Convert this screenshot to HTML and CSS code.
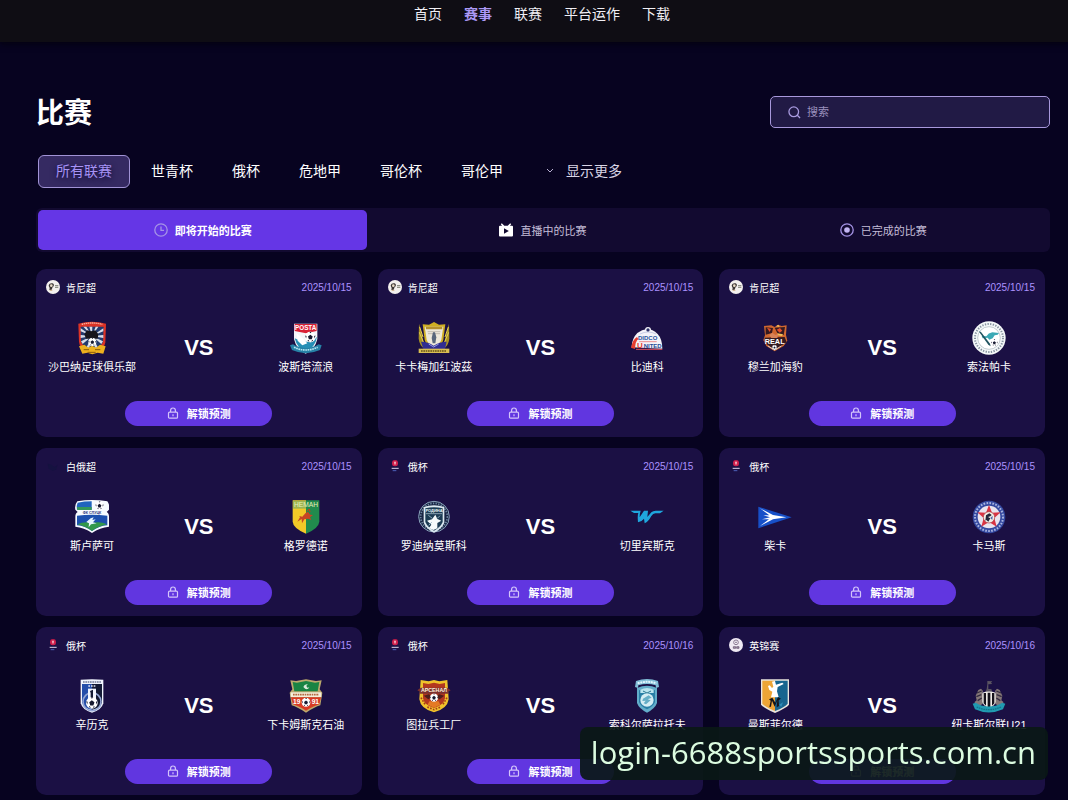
FILE: index.html
```html
<!DOCTYPE html>
<html lang="zh-CN">
<head>
  <meta charset="utf-8">
  <meta name="viewport" content="width=device-width, initial-scale=1">
  <title>比赛</title>
  <link rel="stylesheet" href="styles.css">
</head>
<body>
  <!-- shared icons -->
  <svg class="sprite" aria-hidden="true">
    <symbol id="icon-lock" viewBox="0 0 12 12">
      <rect x="1.5" y="5.2" width="9" height="6" rx="1" fill="none" stroke="currentColor" stroke-width="1.2"/>
      <path d="M3.6 5V3.4a2.4 2.4 0 0 1 4.8 0V5M6 7.2v2" fill="none" stroke="currentColor" stroke-width="1.2"/>
    </symbol>
    <symbol id="league-kenya" viewBox="0 0 42 42">
      <circle cx="21" cy="21" r="21" fill="#f3f0ee"/>
      <path d="M8 17c1-7 9-9 14-6 3 3 2 8-2 10l-3 8-7 1 1-6z" fill="#3b3634"/>
      <circle cx="16" cy="17" r="4" fill="#e9dcc8"/>
      <path d="M27 17h10M27 22h10" stroke="#7c7f72" stroke-width="3"/>
      <path d="M11 31h8" stroke="#b98c4e" stroke-width="2"/>
    </symbol>
    <symbol id="league-russia" viewBox="0 0 42 42">
      <path d="M14 4h14v17H14z" fill="#8c1440"/>
      <circle cx="21" cy="13" r="9" fill="#cf1f4c"/>
      <path d="M18 8h6l-1 6-2 5-2-5z" fill="#f4b9c4"/>
      <path d="M11 28h21" stroke="#d9d3ea" stroke-width="3"/>
      <path d="M14 35h11" stroke="#4c60b8" stroke-width="3"/>
    </symbol>
    <symbol id="league-belarus" viewBox="0 0 42 42">
      <path d="M5 14l12 3 8 8 10-8-5 15-10 3-12-6z" fill="#151240"/>
    </symbol>
    <symbol id="league-england" viewBox="0 0 42 42">
      <circle cx="21" cy="21" r="21" fill="#efe9f3"/>
      <circle cx="21" cy="13" r="7" fill="none" stroke="#8c7b94" stroke-width="3"/>
      <path d="M18 13h6M13 26h7v5h-7zM23 26h7v5h-7z" stroke="#5b4b66" stroke-width="2" fill="#a98fae"/>
    </symbol>
    <symbol id="ball" viewBox="0 0 24 24">
      <circle cx="12" cy="12" r="11.5" fill="#fff"/>
      <path d="M12 7l5 4-2 6H9l-2-6zM10 1h5l-3 3zM1 9l3 1-1 5zM23 9l-3 1 1 5zM6 20l2-2 2 4zM18 20l-2-2-2 4z" fill="#171a30"/>
    </symbol>
  </svg>

  <header class="topbar">
    <nav class="nav">
      <a href="#">首页</a>
      <a href="#" class="current">赛事</a>
      <a href="#">联赛</a>
      <a href="#">平台运作</a>
      <a href="#">下载</a>
    </nav>
  </header>

  <main class="page">
    <div class="page-head">
      <h1>比赛</h1>
      <label class="search">
        <svg viewBox="0 0 14 14" aria-hidden="true"><circle cx="6.2" cy="6.2" r="5.2"/><path d="M10 10l3 3"/></svg>
        <input type="search" placeholder="搜索" aria-label="搜索">
      </label>
    </div>

    <div class="filters">
      <button type="button" class="chip active">所有联赛</button>
      <button type="button" class="chip">世青杯</button>
      <button type="button" class="chip">俄杯</button>
      <button type="button" class="chip">危地甲</button>
      <button type="button" class="chip">哥伦杯</button>
      <button type="button" class="chip">哥伦甲</button>
      <button type="button" class="chip more">
        <svg viewBox="0 0 8 8" aria-hidden="true"><path d="M1 3l3 3 3-3"/></svg>
        显示更多
      </button>
    </div>

    <div class="tabs">
      <button type="button" class="tab active">
        <svg viewBox="0 0 14 14" aria-hidden="true"><circle cx="7" cy="7" r="6.2"/><path d="M7 3.6V7.4h3"/></svg>
        即将开始的比赛
      </button>
      <button type="button" class="tab">
        <svg viewBox="0 0 14 14" aria-hidden="true"><path class="tv" d="M2.800.3L5.300 2.800h3.400L11.200.3l1 .9-1.300 1.600H13q1 0 1 1v8.700q0 1-1 1H1q-1 0-1-1V3.800q0-1 1-1h2.100L1.800 1.200z"/><path class="play" d="M5 5.200v5.600L9.800 8z"/></svg>
        直播中的比赛
      </button>
      <button type="button" class="tab">
        <svg viewBox="0 0 14 14" aria-hidden="true"><circle cx="7" cy="7" r="6.2"/><circle class="dot" cx="7" cy="7" r="2.8"/></svg>
        已完成的比赛
      </button>
    </div>

    <div class="matches">
      <article class="card">
        <div class="card-head">
          <svg class="league" aria-hidden="true"><use href="#league-kenya"/></svg>
          <span>肯尼超</span>
          <time>2025/10/15</time>
        </div>
        <div class="versus">
          <div class="team">
            <svg class="crest" viewBox="0 0 102 102" aria-hidden="true">
              <path d="M10 8Q50-4 93 8L91 64Q88 82 74 86H29Q14 80 12 62z" fill="#dc3326"/>
              <path d="M17 17h69l-2 46-12 19H30L18 62z" fill="#233a6d"/>
              <path d="M51 45L17 22v9zM51 45L17 42v9zM51 45L18 61l5 8zM51 45L25 17h9zM51 45L43 17h9zM51 45L62 17h8zM51 45l34-23v9zM51 45l34-3v9zM51 45l33 16-5 8zM51 45L34 80h9zM51 45l9 35h9z" fill="#d9dde8"/>
              <path d="M20 10q31-8 62 0" stroke="#f8b39f" stroke-width="4" stroke-dasharray="4 2" fill="none"/>
              <path d="M28 40l8-12 12 3 13-3 9 12-2 13H33z" fill="#17151c"/>
              <path d="M12 76l16-5 12 9 11-6 12 6 12-9 17 5-7 22-17-3-16 5-15-5-15 3z" fill="#eeb11e"/>
              <path d="M26 86h16M60 86h16M38 94h24" stroke="#8b5b0b" stroke-width="3"/>
              <use href="#ball" x="39" y="50" width="26" height="26"/>
            </svg>
            <span class="team-name">沙巴纳足球俱乐部</span>
          </div>
          <strong class="vs">VS</strong>
          <div class="team">
            <svg class="crest" viewBox="0 0 102 102" aria-hidden="true">
              <path d="M15 8h70v46Q78 86 50 98 22 86 15 54z" fill="#f5f6fa"/>
              <path d="M17 9h66v21L51 37 17 30z" fill="#d92136"/>
              <text x="50" y="27" text-anchor="middle" font-size="19" font-weight="bold" fill="#fff">POSTA</text>
              <path d="M17 52q16 9 33 10 18 1 34-14-5 30-34 45Q24 81 17 52z" fill="#268fb5"/>
              <use href="#ball" x="47" y="31" width="34" height="34"/>
              <path d="M22 36l19 16 14 15-15 6-14-14z" fill="#fff"/>
              <path d="M3 73l9-3q39 23 77 0l9 3-5 14q-43 19-84 0z" fill="#2681a6"/>
              <path d="M15 79q35 16 71 0" stroke="#b7e7f4" stroke-width="5" stroke-dasharray="5 2" fill="none"/>
            </svg>
            <span class="team-name">波斯塔流浪</span>
          </div>
        </div>
        <button type="button" class="unlock"><svg aria-hidden="true"><use href="#icon-lock"/></svg>解锁预测</button>
      </article>

      <article class="card">
        <div class="card-head">
          <svg class="league" aria-hidden="true"><use href="#league-kenya"/></svg>
          <span>肯尼超</span>
          <time>2025/10/15</time>
        </div>
        <div class="versus">
          <div class="team">
            <svg class="crest" viewBox="0 0 102 102" aria-hidden="true">
              <path d="M6 8q7 25 12 47l4 28q-14-9-17-30zM96 8q-7 25-12 47l-4 28q14-9 17-30z" fill="#a99224"/>
              <path d="M8 18l10 30M7 34l12 29M94 18L84 48M95 34L83 63" stroke="#e4cf53" stroke-width="3"/>
              <path d="M17 10l19 1 15-8 15 8 19-1-6 46Q74 77 51 86 28 77 23 56z" fill="#cfae22"/>
              <path d="M23 17h56l-6 39Q69 69 51 77 33 69 29 56z" fill="#ede8db"/>
              <path d="M26 17h50v8H27z" fill="#b4902d"/>
              <path d="M32 32h38M33 38h36" stroke="#aaa39a" stroke-width="2"/>
              <path d="M48 34h6l4 15-3 18h-8l-3-16z" fill="#59677c"/>
              <path d="M12 62q22 0 38 12 17-12 39-12l-5 22H19z" fill="#302d91"/>
              <path d="M35 69l15 9 15-9" stroke="#969be5" stroke-width="3" fill="none"/>
              <path d="M5 83h92v13H5z" fill="#d9bf52"/>
              <path d="M12 90h77" stroke="#645118" stroke-width="4" stroke-dasharray="5 2"/>
            </svg>
            <span class="team-name">卡卡梅加红波茲</span>
          </div>
          <strong class="vs">VS</strong>
          <div class="team">
            <svg class="crest" viewBox="0 0 102 102" aria-hidden="true">
              <path d="M5 79Q5 53 22 36 36 25 51 24 68 24 83 39 97 54 97 83z" fill="#f4f3f9"/>
              <path d="M3 80q6-26 18-32l4 6Q16 60 15 84z" fill="#e73e30"/>
              <circle cx="54" cy="27" r="9" fill="#f4f3f9"/>
              <circle cx="54" cy="27" r="5" fill="#2c3269"/>
              <path d="M30 39q24-12 48 0" fill="none" stroke="#b4b9da" stroke-width="2"/>
              <text x="53" y="58" text-anchor="middle" font-size="18" font-weight="bold" fill="#29539e">DIDCO</text>
              <path d="M28 62h52" stroke="#e85b56" stroke-width="2"/>
              <text x="30" y="81" text-anchor="middle" font-size="24" font-weight="bold" fill="#e73e30">U</text>
              <text x="68" y="80" text-anchor="middle" font-size="18" font-weight="bold" fill="#264c94">NITED</text>
              <path d="M18 85h79" stroke="#dd5260" stroke-width="3"/>
            </svg>
            <span class="team-name">比迪科</span>
          </div>
        </div>
        <button type="button" class="unlock"><svg aria-hidden="true"><use href="#icon-lock"/></svg>解锁预测</button>
      </article>

      <article class="card">
        <div class="card-head">
          <svg class="league" aria-hidden="true"><use href="#league-kenya"/></svg>
          <span>肯尼超</span>
          <time>2025/10/15</time>
        </div>
        <div class="versus">
          <div class="team">
            <svg class="crest" viewBox="0 0 102 102" aria-hidden="true">
              <path d="M18 15l22-2 10 5 10-7 11 4 15-2-2 29 4 17-11 16-27 16-25-16-9-18 5-14z" fill="#cf672f"/>
              <path d="M23 19l22 2-3 15-19 5zM50 20l31-2-4 24-18-4zM20 50l60-2 6 16-36 22-30-21z" fill="#351a20"/>
              <path d="M27 20l12 4-4 9zM56 26l10-5 7 8-8 6z" fill="#e24d2e"/>
              <path d="M54 16l7-5 4 7zM58 37l17 3-3 5-14-2z" fill="#f1c35c"/>
              <path d="M34 42l9-7 9 7 9-4-3 13H40z" fill="#d78358"/>
              <text x="50" y="70" text-anchor="middle" font-size="22" font-weight="bold" fill="#fff">REAL</text>
              <path d="M30 75l20 12 20-12" stroke="#d9c9c6" stroke-width="3" fill="none"/>
              <use href="#ball" x="42" y="72" width="15" height="15"/>
            </svg>
            <span class="team-name">穆兰加海豹</span>
          </div>
          <strong class="vs">VS</strong>
          <div class="team">
            <svg class="crest" viewBox="0 0 102 102" aria-hidden="true">
              <circle cx="51" cy="51" r="50" fill="#f5f8f9"/>
              <circle cx="51" cy="51" r="42" fill="none" stroke="#8794a0" stroke-width="6" stroke-dasharray="4 4"/>
              <circle cx="51" cy="51" r="34" fill="#fff" stroke="#a6b3b9" stroke-width="2"/>
              <path d="M29 45l14 1q6-10 18-12l20 2-4 5-9 2-6 9-10 4-5-6-15 2z" fill="#3ba9b5"/>
              <path d="M20 31l29 40 7 5-2-8-27-35z" fill="#20535f"/>
              <use href="#ball" x="56" y="54" width="22" height="22"/>
            </svg>
            <span class="team-name">索法帕卡</span>
          </div>
        </div>
        <button type="button" class="unlock"><svg aria-hidden="true"><use href="#icon-lock"/></svg>解锁预测</button>
      </article>

      <article class="card">
        <div class="card-head">
          <svg class="league" aria-hidden="true"><use href="#league-belarus"/></svg>
          <span>白俄超</span>
          <time>2025/10/15</time>
        </div>
        <div class="versus">
          <div class="team">
            <svg class="crest" viewBox="0 0 102 102" aria-hidden="true">
              <path d="M7 4Q51-4 97 4q8 11 5 25l-7 7q7 3 7 14v30Q75 82 51 99 27 82 1 80V50q0-11 7-14l-7-7Q-2 15 7 4z" fill="#f7fbff"/>
              <path d="M8 8q20-4 42-4v25H6Q3 17 8 8z" fill="#2164bd"/>
              <path d="M6 21h44v9H7z" fill="#34985a"/>
              <use href="#ball" x="60" y="3" width="27" height="27"/>
              <text x="51" y="43" text-anchor="middle" font-size="11" font-weight="bold" fill="#1f3478">ФК СЛУЦК</text>
              <path d="M6 47q45-5 91 0v29Q72 78 51 93 30 78 6 76z" fill="#1c50ae"/>
              <path d="M7 73q22-10 44-4 23-6 45 4-27 6-45 20Q33 79 7 73z" fill="#32984a"/>
              <path d="M34 66l13-11 9-3-4 8 10-2-8 9 11 3-17 3-7 9 1-12z" fill="#e7f5ff"/>
            </svg>
            <span class="team-name">斯卢萨可</span>
          </div>
          <strong class="vs">VS</strong>
          <div class="team">
            <svg class="crest" viewBox="0 0 102 102" aria-hidden="true">
              <path d="M11 1h40v100Q12 84 11 65z" fill="#f3c928"/>
              <path d="M51 1h40v64q-2 20-40 36z" fill="#218b4d"/>
              <path d="M12 2h39v24H12z" fill="#9eb552"/>
              <text x="51" y="21" text-anchor="middle" font-size="20" fill="#e8efbd">НЕМАН</text>
              <path d="M31 48l9 2 9-10 8-5 7 9 8 1-9 7 4 8-10-4-11 2-7 12-1-13-13 8 8-13z" fill="#c74524"/>
              <path d="M53 34l8-7 2 9" stroke="#bd3e1e" stroke-width="3" fill="none"/>
            </svg>
            <span class="team-name">格罗德诺</span>
          </div>
        </div>
        <button type="button" class="unlock"><svg aria-hidden="true"><use href="#icon-lock"/></svg>解锁预测</button>
      </article>

      <article class="card">
        <div class="card-head">
          <svg class="league" aria-hidden="true"><use href="#league-russia"/></svg>
          <span>俄杯</span>
          <time>2025/10/15</time>
        </div>
        <div class="versus">
          <div class="team">
            <svg class="crest" viewBox="0 0 102 102" aria-hidden="true">
              <circle cx="51" cy="50" r="46" fill="#182443" stroke="#8ca4bd" stroke-width="3"/>
              <circle cx="51" cy="50" r="40" fill="none" stroke="#6f88a3" stroke-width="5" stroke-dasharray="4 4"/>
              <path d="M20 21q31-10 62 0v47Q75 86 51 98 27 86 20 68z" fill="#dce9f1"/>
              <path d="M25 25q26-7 52 0v41Q70 82 51 92 32 82 25 66z" fill="#1b3b53"/>
              <text x="51" y="37" text-anchor="middle" font-size="12" font-weight="bold" fill="#e9f5fb">РОДИНА</text>
              <path d="M27 41h48" stroke="#bdd5e2" stroke-width="2"/>
              <path d="M30 62l15-4 10-14 6 13 12 5-12 7 0 16-12 5-13-6 7-10z" fill="#f5fafb"/>
              <path d="M34 46l12 9M69 47l-8 8M35 76l9-9" stroke="#8caabc" stroke-width="3"/>
            </svg>
            <span class="team-name">罗迪纳莫斯科</span>
          </div>
          <strong class="vs">VS</strong>
          <div class="team">
            <svg class="crest" viewBox="0 0 102 102" aria-hidden="true">
              <path d="M1 32h31q-4 12-3 20l13-20h12L52 51l12-14q5-5 13-5h24l-11 8H76q-7 0-12 8-9 17-20 22l-2-14q-7 9-18 11-2-20 1-28H12z" fill="#1fa6dd"/>
            </svg>
            <span class="team-name">切里宾斯克</span>
          </div>
        </div>
        <button type="button" class="unlock"><svg aria-hidden="true"><use href="#icon-lock"/></svg>解锁预测</button>
      </article>

      <article class="card">
        <div class="card-head">
          <svg class="league" aria-hidden="true"><use href="#league-russia"/></svg>
          <span>俄杯</span>
          <time>2025/10/15</time>
        </div>
        <div class="versus">
          <div class="team">
            <svg class="crest" viewBox="0 0 102 102" aria-hidden="true">
              <path d="M1 20l100 32L1 85z" fill="#1750c8"/>
              <path d="M6 25l39 20 40 7-40 6L6 78l27-20H12l24-6-20-6h18z" fill="#fff"/>
            </svg>
            <span class="team-name">柴卡</span>
          </div>
          <strong class="vs">VS</strong>
          <div class="team">
            <svg class="crest" viewBox="0 0 102 102" aria-hidden="true">
              <circle cx="51" cy="51" r="49" fill="#3449a0"/>
              <circle cx="51" cy="51" r="42" fill="none" stroke="#a9b5e0" stroke-width="6" stroke-dasharray="5 4"/>
              <circle cx="51" cy="51" r="34" fill="#e9e4ee"/>
              <path d="M51 15l9 23 26-1-19 17 7 26-23-14-23 14 7-26-19-17 26 1z" fill="#d93443"/>
              <circle cx="51" cy="52" r="17" fill="#f5efe7" stroke="#a43c45" stroke-width="2"/>
              <path d="M42 46l10-6 7 5-4 4-7 2 7 4-6 10-6-5-3 2z" fill="#22273b"/>
              <path d="M55 54l7-7-1 13z" fill="#4b63ad"/>
            </svg>
            <span class="team-name">卡马斯</span>
          </div>
        </div>
        <button type="button" class="unlock"><svg aria-hidden="true"><use href="#icon-lock"/></svg>解锁预测</button>
      </article>

      <article class="card">
        <div class="card-head">
          <svg class="league" aria-hidden="true"><use href="#league-russia"/></svg>
          <span>俄杯</span>
          <time>2025/10/15</time>
        </div>
        <div class="versus">
          <div class="team">
            <svg class="crest" viewBox="0 0 102 102" aria-hidden="true">
              <path d="M17 2q34-3 68 0v71Q80 93 51 101 22 93 17 73z" fill="#f0f4fd"/>
              <path d="M21 15h30v78Q24 87 21 70z" fill="#244eaa"/>
              <path d="M51 15h30v55Q79 85 51 93z" fill="#131a35"/>
              <path d="M24 9h54" stroke="#6f7895" stroke-width="5" stroke-dasharray="5 2"/>
              <path d="M40 21h22" stroke="#e2e8fa" stroke-width="4" stroke-dasharray="5 3"/>
              <circle cx="51" cy="68" r="27" fill="none" stroke="#93a5d3" stroke-width="5"/>
              <path d="M39 29h24v31H39z" fill="#f1f5ff"/>
              <path d="M45 36l9-4v25h-7V42z" fill="#131a35"/>
              <use href="#ball" x="32" y="53" width="37" height="37"/>
            </svg>
            <span class="team-name">辛历克</span>
          </div>
          <strong class="vs">VS</strong>
          <div class="team">
            <svg class="crest" viewBox="0 0 102 102" aria-hidden="true">
              <path d="M4 4l17 2 30-5 30 5 17-2-6 27 8 10-6 38q-17 5-43 22Q25 84 8 79L2 41l8-10z" fill="#bba96c"/>
              <path d="M11 9l13 2 27-5 27 5 13-2-5 28H16z" fill="#198443"/>
              <path d="M43 24q3-10 14-8-8 4-2 10l6-1q-7 12-18-1z" fill="#dbeadc"/>
              <path d="M5 40h92v14H5z" fill="#f4efdc"/>
              <path d="M12 47h78" stroke="#b46a42" stroke-width="5" stroke-dasharray="5 2"/>
              <path d="M6 55h90l-5 21q-14 4-40 19Q26 80 12 76z" fill="#d83b24"/>
              <text x="23" y="76" text-anchor="middle" font-size="20" font-weight="bold" fill="#fff">19</text>
              <text x="79" y="76" text-anchor="middle" font-size="20" font-weight="bold" fill="#fff">91</text>
              <use href="#ball" x="37" y="56" width="28" height="28"/>
            </svg>
            <span class="team-name">下卡姆斯克石油</span>
          </div>
        </div>
        <button type="button" class="unlock"><svg aria-hidden="true"><use href="#icon-lock"/></svg>解锁预测</button>
      </article>

      <article class="card">
        <div class="card-head">
          <svg class="league" aria-hidden="true"><use href="#league-russia"/></svg>
          <span>俄杯</span>
          <time>2025/10/16</time>
        </div>
        <div class="versus">
          <div class="team">
            <svg class="crest" viewBox="0 0 102 102" aria-hidden="true">
              <path d="M11 3l24 4 16-4 16 4 24-4 4 58q-4 29-44 39Q11 90 7 61z" fill="#f0c22b"/>
              <path d="M18 12l16 3 17-4 17 4 16-3v46q-5 22-33 29Q23 80 18 58z" fill="#b3381f"/>
              <path d="M12 56l14 23M90 56L76 79M31 84l20 8 20-8" stroke="#a83c16" stroke-width="5" stroke-dasharray="5 4" fill="none"/>
              <path d="M1 34l10-8h80l10 8-9 5 5 5H5l5-5z" fill="#7c302e"/>
              <text x="51" y="40" text-anchor="middle" font-size="16" font-weight="bold" fill="#fff3de">АРСЕНАЛ</text>
              <path d="M20 50l15-4 13 6-14 9zM82 50l-15-4-13 6 14 9z" fill="#4e1e1b"/>
              <path d="M37 67h28l5 10-19 9-19-9z" fill="#e47a24"/>
              <use href="#ball" x="38" y="43" width="26" height="26"/>
            </svg>
            <span class="team-name">图拉兵工厂</span>
          </div>
          <strong class="vs">VS</strong>
          <div class="team">
            <svg class="crest" viewBox="0 0 102 102" aria-hidden="true">
              <path d="M18 6q33-12 66 0l3 18-9 3-1-8q-26-8-52 0l-1 8-9-3z" fill="#81bdd7"/>
              <path d="M23 13q28-9 56 0" stroke="#e2f7fd" stroke-width="6" stroke-dasharray="6 2" fill="none"/>
              <path d="M21 27q30-14 60 0v45q-6 17-30 29-24-12-30-29z" fill="#63adc9"/>
              <path d="M27 34q24-10 48 0v35q-5 13-24 22-19-9-24-22z" fill="#287fa6"/>
              <path d="M31 32q20-10 40 0v10H31z" fill="#bae5ef"/>
              <path d="M39 36l12 6 12-6" stroke="#26738e" stroke-width="3" fill="none"/>
              <circle cx="51" cy="63" r="20" fill="#d4edf3"/>
              <path d="M39 59l17-10 9 7-12 5 9 3-14 12-7-3 6-8-10 1z" fill="#65aec6"/>
            </svg>
            <span class="team-name">索科尔萨拉托夫</span>
          </div>
        </div>
        <button type="button" class="unlock"><svg aria-hidden="true"><use href="#icon-lock"/></svg>解锁预测</button>
      </article>

      <article class="card">
        <div class="card-head">
          <svg class="league" aria-hidden="true"><use href="#league-england"/></svg>
          <span>英锦赛</span>
          <time>2025/10/16</time>
        </div>
        <div class="versus">
          <div class="team">
            <svg class="crest" viewBox="0 0 102 102" aria-hidden="true">
              <path d="M9 1h84v76q-7 9-42 25Q16 86 9 77z" fill="#e9e5dd"/>
              <path d="M13 5h38v91Q20 82 13 74z" fill="#eda536"/>
              <path d="M51 5h38v69q-8 10-38 22z" fill="#17658f"/>
              <path d="M42 8l9-2 3 11 19-6 4 4-18 9-2 13 5 18H39l4-17-9-5-4-12 5-2 7 8 4-4z" fill="#fff"/>
              <path d="M33 61l10-5 9 15 8-17 9 5-7 5 1 17-7 4 2-21-8 19-8-18-3 18-5 1 4-19z" fill="#14161b"/>
              <path d="M63 77l12-7-5 13z" fill="#2d8db8"/>
            </svg>
            <span class="team-name">曼斯菲尔德</span>
          </div>
          <strong class="vs">VS</strong>
          <div class="team">
            <svg class="crest" viewBox="0 0 102 102" aria-hidden="true">
              <path d="M46 6l15 1-4 4 4 4-12 1v14h9l3 10H40l4-10 2-14z" fill="#5a5461"/>
              <path d="M7 70l7-6-3-14 8-17 8-4 6 7-3 8 7 4-3 25-14 10zM95 70l-7-6 3-14-8-17-8-4-6 7 3 8-7 4 3 25 14 10z" fill="#857878"/>
              <path d="M15 42l14-6M13 53l15-6M17 65l12-8M87 42l-14-6M89 53l-15-6M85 65l-12-8" stroke="#332b40" stroke-width="4"/>
              <path d="M31 41q20-7 40 0v28q-4 13-20 20-16-7-20-20z" fill="#efece7"/>
              <path d="M35 42h7v38l-7-7zM47 41h8v45l-4 2-4-2zM60 42h7v31l-7 7z" fill="#16131b"/>
              <path d="M2 74l9-3q39 23 80 0l9 3-7 17q-43 19-84 0z" fill="#219bb1"/>
              <path d="M14 84q36 16 74 0" stroke="#12748a" stroke-width="4" stroke-dasharray="5 2" fill="none"/>
            </svg>
            <span class="team-name">纽卡斯尔联U21</span>
          </div>
        </div>
        <button type="button" class="unlock"><svg aria-hidden="true"><use href="#icon-lock"/></svg>解锁预测</button>
      </article>
    </div>
  </main>

  <div class="site-badge">login-6688sportssports.com.cn</div>
</body>
</html>
```
FILE: styles.css
```css
* {
  margin: 0;
  padding: 0;
  box-sizing: border-box;
}

body {
  background-color: #070320;
  color: #fff;
  font-family: "Liberation Sans", "Noto Sans CJK SC", sans-serif;
  overflow-x: hidden;
}

button {
  border: 0;
  background: none;
  color: inherit;
  font-family: inherit;
  cursor: pointer;
}

.sprite {
  display: none;
}

/* top navigation */
.topbar {
  height: 42px;
  padding: 3px 0 0 16px;
  background-color: #0f0d14;
  box-shadow: 0 2px 6px #04020f;
}

.nav {
  display: flex;
  justify-content: center;
  gap: 22px;
  font-size: 14px;
  line-height: 22px;
}

.nav a {
  color: #f1eff5;
  text-decoration: none;
}

.nav .current {
  color: #ab98f5;
  font-weight: bold;
}

/* title and search */
.page {
  padding: 54px 18px 4px 36px;
}

.page-head {
  display: flex;
  align-items: center;
  justify-content: space-between;
  height: 32px;
}

h1 {
  padding-top: 4px;
  font-size: 28px;
  line-height: 32px;
}

.search {
  display: flex;
  align-items: center;
  gap: 6px;
  width: 280px;
  height: 32px;
  padding: 0 17px;
  border: 1px solid #a898dc;
  border-radius: 5px;
  background-color: #211a45;
}

.search svg {
  width: 13px;
  height: 13px;
  fill: none;
  stroke: #a99be0;
  stroke-width: 1.4;
}

.search input {
  flex: 1;
  min-width: 0;
  border: 0;
  outline: 0;
  background: none;
  color: #fff;
  font-family: inherit;
  font-size: 11px;
}

.search input::placeholder {
  color: #9a90bd;
}

/* league filters */
.filters {
  display: flex;
  gap: 3px;
  margin: 27px 0 20px 2px;
}

.chip {
  height: 33px;
  padding: 0 17px 4px;
  border: 1px solid transparent;
  border-radius: 6px;
  font-size: 14px;
  white-space: nowrap;
}

.chip.active {
  border-color: #a193d6;
  background-color: #352a62;
  color: #a793f5;
  text-shadow: 0 2px 6px #0c0630;
}

.chip.more {
  display: flex;
  align-items: center;
  gap: 12px;
  padding-left: 21px;
  color: #d9d5e6;
}

.more svg {
  width: 8px;
  height: 8px;
  fill: none;
  stroke: #b6aed0;
}

/* match state tabs */
.tabs {
  display: grid;
  grid-template-columns: repeat(3, 1fr);
  gap: 11px;
  padding: 2px;
  border-radius: 6px;
  background-color: #120a30;
}

.tab {
  display: flex;
  align-items: center;
  justify-content: center;
  gap: 7px;
  height: 40px;
  padding-bottom: 1px;
  border-radius: 5px;
  color: #c5bed8;
  font-size: 11px;
}

.tab.active {
  background-color: #6536e6;
  color: #fff;
  font-weight: bold;
}

.tab svg {
  width: 14px;
  height: 14px;
  fill: none;
  stroke: #a594e6;
  stroke-width: 1.3;
}

.tab .tv {
  fill: #fff;
  stroke: none;
}

.tab .play {
  fill: #120a30;
  stroke: none;
}

.tab .dot {
  fill: #c2b5f2;
  stroke: none;
}

/* match cards */
.matches {
  display: grid;
  grid-template-columns: repeat(3, 1fr);
  gap: 11px 16px;
  padding: 17px 5px 0 0;
}

.card {
  padding: 11px 10px;
  border-radius: 10px;
  background-color: #1b1044;
}

.card-head {
  display: flex;
  align-items: center;
  gap: 6px;
  height: 14px;
  font-size: 10px;
}

.league {
  width: 14px;
  height: 14px;
}

.card time {
  margin-left: auto;
  color: #ab92ff;
}

.versus {
  display: flex;
  align-items: center;
  justify-content: space-between;
  margin: 27px 0 26px;
}

.team {
  display: flex;
  flex-direction: column;
  align-items: center;
  gap: 4px;
  width: 92px;
}

.crest {
  width: 34px;
  height: 34px;
}

.team-name {
  font-size: 11px;
  line-height: 16px;
  white-space: nowrap;
}

.vs {
  font-size: 22px;
  line-height: 26px;
}

.unlock {
  display: flex;
  align-items: center;
  justify-content: center;
  gap: 8px;
  width: 48%;
  height: 25px;
  margin: 0 auto;
  padding-bottom: 2px;
  border-radius: 13px;
  background-color: #6136e0;
  font-size: 11px;
  font-weight: bold;
}

.unlock svg {
  width: 12px;
  height: 12px;
  color: #d3c4fa;
}

/* address badge over the page */
.site-badge {
  position: fixed;
  right: 20px;
  bottom: 20px;
  padding: 3px 12px 6px 11px;
  border-radius: 8px;
  background-color: rgba(10, 24, 22, 0.92);
  color: #dcfce0;
  font-family: "Open Sans", sans-serif;
  font-size: 31px;
  line-height: 44px;
}
```
